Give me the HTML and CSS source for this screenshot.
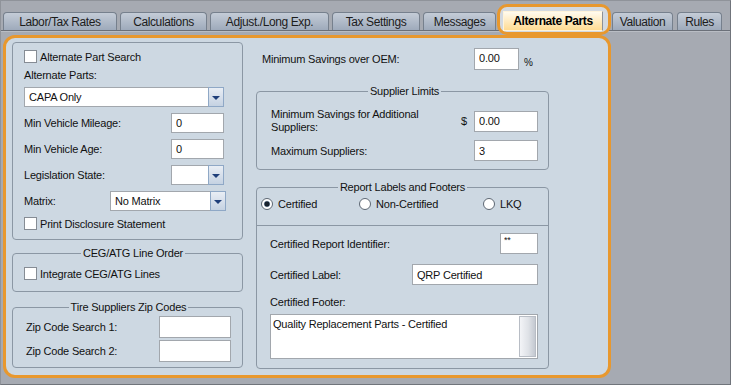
FILE: index.html
```html
<!DOCTYPE html>
<html lang="en">
<head>
    <meta charset="UTF-8">
    <title>Alternate Parts</title>
    <link rel="stylesheet" href="styles.css">
</head>
<body>
<div class="window">
    <div class="tabs">
        <div class="tab t-labor">Labor/Tax Rates</div>
        <div class="tab t-calc">Calculations</div>
        <div class="tab t-adjust">Adjust./Long Exp.</div>
        <div class="tab t-tax">Tax Settings</div>
        <div class="tab t-msg">Messages</div>
        <div class="tab active"><span class="face">Alternate Parts</span></div>
        <div class="tab t-val">Valuation</div>
        <div class="tab t-rules">Rules</div>
    </div>

    <div class="panel">
        <!-- left column -->
        <div class="col-left">
            <div class="group g-main">
                <label class="ckrow"><input type="checkbox" class="ck"> Alternate Part Search</label>
                <div class="lbl">Alternate Parts:</div>
                <div class="sel sel-parts"><span class="val">CAPA Only</span><span class="btn"></span></div>
                <div class="field"><span>Min Vehicle Mileage:</span><input class="txt w-num" value="0"></div>
                <div class="field"><span>Min Vehicle Age:</span><input class="txt w-num" value="0"></div>
                <div class="field">
                    <span>Legislation State:</span>
                    <div class="sel sel-state"><span class="val"></span><span class="btn"></span></div>
                </div>
                <div class="field">
                    <span>Matrix:</span>
                    <div class="sel sel-matrix"><span class="val">No Matrix</span><span class="btn"></span></div>
                </div>
                <label class="ckrow"><input type="checkbox" class="ck"> Print Disclosure Statement</label>
            </div>

            <fieldset class="group g-ceg">
                <legend>CEG/ATG Line Order</legend>
                <label class="ckrow"><input type="checkbox" class="ck"> Integrate CEG/ATG Lines</label>
            </fieldset>

            <fieldset class="group g-zip">
                <legend>Tire Suppliers Zip Codes</legend>
                <div class="field zip-row"><span>Zip Code Search 1:</span><input class="txt w-zip" value=""></div>
                <div class="field zip-row"><span>Zip Code Search 2:</span><input class="txt w-zip" value=""></div>
            </fieldset>
        </div>

        <!-- right column -->
        <div class="col-right">
            <div class="oem-row">
                <span class="oem-label">Minimum Savings over OEM:</span>
                <input class="txt w-oem" value="0.00">
                <span class="pct">%</span>
            </div>

            <fieldset class="group g-supp">
                <legend>Supplier Limits</legend>
                <div class="field supp-row">
                    <span>Minimum Savings for Additional<br>Suppliers:</span>
                    <span class="money">$ <input class="txt w-amt" value="0.00"></span>
                </div>
                <div class="field supp-row2"><span>Maximum Suppliers:</span><input class="txt w-amt" value="3"></div>
            </fieldset>

            <fieldset class="group g-report">
                <legend>Report Labels and Footers</legend>
                <div class="radios">
                    <label class="opt opt-1"><input type="radio" class="rd" name="cert" checked> Certified</label>
                    <label class="opt opt-2"><input type="radio" class="rd" name="cert"> Non-Certified</label>
                    <label class="opt"><input type="radio" class="rd" name="cert"> LKQ</label>
                </div>
                <div class="report-body">
                    <div class="field"><span>Certified Report Identifier:</span><input class="txt w-ident" value="**"></div>
                    <div class="field row-label"><span>Certified Label:</span><input class="txt w-label" value="QRP Certified"></div>
                    <div class="lbl footer-lbl">Certified Footer:</div>
                    <div class="memo">
                        <div class="memo-text">Quality Replacement Parts - Certified</div>
                        <div class="memo-bar"></div>
                    </div>
                </div>
            </fieldset>
        </div>
    </div>
</div>
</body>
</html>
```

FILE: styles.css
```css
/* base */
body{
    margin:0;
    font-family:"Liberation Sans", Arial, sans-serif;
    font-size:11px;
    letter-spacing:-0.2px;
    color:#111;
}

.window{
    width:731px;
    height:385px;
    box-sizing:border-box;
    background:#a6aab2;
    border:1px solid;
    border-color:#8f939a #70747b #70747b #8f939a;
}

/* tab strip */
.tabs{
    display:flex;
    gap:3px;
    height:18px;
    padding:11px 0 0 2px;
    border-bottom:1px solid #6b7079;
    box-shadow:0 1px 0 #b9bdc4;
}
.tab{
    box-sizing:border-box;
    height:18px;
    border:1px solid #76808d;
    border-bottom:0;
    border-radius:4px 4px 0 0;
    background:linear-gradient(#c4ccd7, #9eaabb);
    display:flex;
    align-items:center;
    justify-content:center;
    font-size:12px;
    letter-spacing:-0.4px;
    color:#1c1c1c;
}
.t-labor{width:114px;}
.t-calc{width:87px;}
.t-adjust{width:119px;}
.t-tax{width:88px;}
.t-msg{width:73px;}
.t-val{width:61px; margin-left:6px;}
.t-rules{width:45px; margin-left:1px;}

.tab.active{
    position:relative;
    width:100px;
    height:20px;
    margin:-1px 0 0 4px;
    border:0;
    background:none;
}
.tab.active::before{
    content:"";
    position:absolute;
    left:-6px; right:-8px; top:-7px; bottom:-4px;
    border:3px solid #e8982e;
    border-radius:10px;
    background:#d3d9e0;
}
.tab.active .face{
    position:relative;
    box-sizing:border-box;
    width:100%;
    height:100%;
    display:flex;
    align-items:center;
    justify-content:center;
    background:linear-gradient(#fffbef, #ffdb92);
    border:1px solid #fff4da;
    border-right-color:#8d9096;
    font-weight:bold;
    color:#000;
}

/* main panel */
.panel{
    box-sizing:border-box;
    width:608px;
    height:343px;
    margin:4px 0 0 2px;
    padding:4px 0 0 6px;
    border:3px solid #e8982e;
    border-radius:12px;
    background:#cdd8e2;
    display:flex;
    gap:13px;
}

.col-left{
    width:231px;
    display:flex;
    flex-direction:column;
}
.col-right{
    width:293px;
    display:flex;
    flex-direction:column;
}

.group{
    box-sizing:border-box;
    margin:0;
    min-width:0;
    border:1px solid #8b97a4;
    border-radius:4px;
}
legend{
    margin:0 auto;
    padding:0 2px;
    line-height:13px;
}

.g-main{
    height:198px;
    padding:7px 18px 0 11px;
    display:flex;
    flex-direction:column;
    gap:6px;
}
.g-ceg{
    margin-top:7px;
    padding:7px 0 11px 11px;
}
.g-zip{
    margin-top:9px;
    padding:3px 11px 6px 13px;
    display:flex;
    flex-direction:column;
    gap:4px;
}

.ckrow{
    display:flex;
    align-items:center;
    gap:3px;
    height:13px;
}
.lbl{
    height:12px;
    line-height:12px;
}
.field{
    display:flex;
    align-items:center;
    justify-content:space-between;
    height:20px;
}

/* controls */
.ck{
    appearance:none;
    box-sizing:border-box;
    width:13px;
    height:13px;
    margin:0;
    border:1px solid #868c94;
    background:#fff;
}
.rd{
    appearance:none;
    box-sizing:border-box;
    width:12px;
    height:12px;
    margin:0;
    border:1px solid #5d6773;
    border-radius:50%;
    background:#fff;
}
.rd:checked{
    background:radial-gradient(circle, #18222e 0 2.2px, #7d8ea3 2.8px, #fff 3.6px);
}
.txt{
    box-sizing:border-box;
    height:20px;
    margin:0;
    padding:0 4px;
    border:1px solid #a2a7ad;
    background:#fff;
    font:inherit;
    letter-spacing:inherit;
    color:#111;
    outline:none;
}
.w-num{width:53px;}
.w-zip{width:72px; height:22px;}
.w-oem{width:45px; height:22px; padding-bottom:3px;}
.w-amt{width:64px; height:21px;}
.w-ident{width:38px; height:21px; font-size:9px; padding:0 0 8px 3px;}
.w-label{width:126px; height:21px;}

.sel{
    box-sizing:border-box;
    height:20px;
    display:flex;
    background:#fff;
    border:1px solid #a2a7ad;
    border-right:0;
}
.sel .val{
    flex:1;
    display:flex;
    align-items:center;
    padding-left:4px;
}
.sel .btn{
    box-sizing:border-box;
    width:16px;
    margin:-1px 0;
    border:1px solid #8fa8c6;
    background:linear-gradient(#e9eef5, #c5d2e2);
    display:flex;
    align-items:center;
    justify-content:center;
}
.sel .btn::after{
    content:"";
    margin-top:2px;
    border-left:4px solid transparent;
    border-right:4px solid transparent;
    border-top:4px solid #1f3f7a;
}
.sel-parts{width:200px;}
.sel-state{width:53px;}
.sel-matrix{width:116px; margin-right:-2px;}

/* right side */
.oem-row{
    display:flex;
    align-items:center;
    height:22px;
    margin-top:6px;
    padding-left:6px;
}
.oem-label{width:212px;}
.pct{
    margin:7px 0 0 5px;
    font-size:10px;
}

.g-supp{
    margin-top:15px;
    padding:10px 10px 8px 14px;
}
.supp-row{height:26px; line-height:13px;}
.supp-row2{height:21px; margin-top:6px;}
.money{
    display:flex;
    align-items:center;
    gap:7px;
}

.g-report{
    margin-top:11px;
    padding:0;
}
.radios{
    box-sizing:border-box;
    height:31px;
    padding:4px 0 0 4px;
    display:flex;
    align-items:flex-start;
}
.opt{
    display:flex;
    align-items:center;
    gap:5px;
    height:12px;
}
.opt-1{width:98px;}
.opt-2{width:124px;}

.report-body{
    border-top:1px solid #8b97a4;
    padding:7px 10px 9px 13px;
}
.report-body .field{height:21px;}
.row-label{margin-top:10px;}
.footer-lbl{
    height:13px;
    line-height:13px;
    margin-top:11px;
}
.memo{
    box-sizing:border-box;
    height:45px;
    margin-top:5px;
    padding:1px;
    display:flex;
    border:1px solid #a2a7ad;
    background:#fff;
}
.memo-text{
    flex:1;
    padding:2px 1px;
    line-height:13px;
}
.memo-bar{
    box-sizing:border-box;
    width:17px;
    border:1px solid #b8bdc5;
    background:linear-gradient(90deg, #f3f4f7, #dfe2e7 55%, #c4c9d1);
}
```
